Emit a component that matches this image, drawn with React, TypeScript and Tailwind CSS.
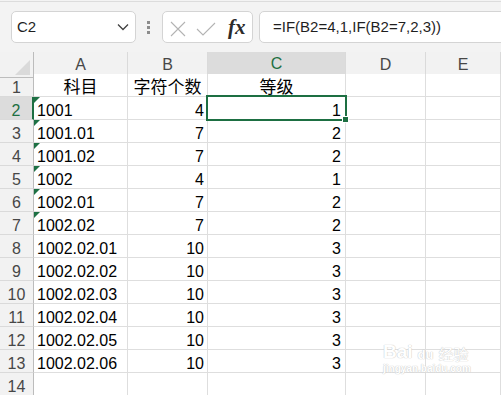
import React from 'react';

const rows: [string, string, string][] = [
  ['1001', '4', '1'],
  ['1001.01', '7', '2'],
  ['1001.02', '7', '2'],
  ['1002', '4', '1'],
  ['1002.01', '7', '2'],
  ['1002.02', '7', '2'],
  ['1002.02.01', '10', '3'],
  ['1002.02.02', '10', '3'],
  ['1002.02.03', '10', '3'],
  ['1002.02.04', '10', '3'],
  ['1002.02.05', '10', '3'],
  ['1002.02.06', '10', '3'],
];

const cols = 'grid grid-cols-[34px_94px_80px_138px_80px_1fr]';
const hdr = 'flex items-center justify-center border-r border-b border-r-[#dadada] border-b-[#bdbdbd] bg-[#f2f2f2] text-[16px] text-[#474747]';
const rowHdr = 'flex items-end justify-center border-r border-b border-r-[#bcbcbc] border-b-[#dadada] bg-[#f2f2f2] text-[16px] leading-[17px] text-[#474747]';
const cell = 'flex items-end border-r border-b border-[#dedede] bg-white text-[16px] leading-[17px] text-black';

function Triangle() {
  return (
    <svg className="absolute left-0 top-0" width="6" height="6" viewBox="0 0 6 6">
      <polygon points="0,0 6,0 0,6" fill="#1d7044" />
    </svg>
  );
}

export default function App() {
  return (
    <div className="relative h-[395px] w-[501px] overflow-hidden bg-[#f3f3f3] font-['Liberation_Sans','Noto_Sans_CJK_SC',sans-serif]">
      {/* toolbar */}
      <div className="mt-[1px] flex h-[51px] items-start border-t border-t-[#dcdcdc] pt-[9px]">
        <div className="ml-[11px] flex h-[32px] w-[125px] shrink-0 items-center justify-between rounded-[5px] border border-[#d4d4d4] bg-white pl-[5px] pr-[6px]">
          <span className="text-[15px] text-[#1f1f1f]">C2</span>
          <svg width="12" height="8" viewBox="0 0 12 8" fill="none">
            <path d="M1 1.5 L6 6.5 L11 1.5" stroke="#404040" strokeWidth="1.3" />
          </svg>
        </div>
        <div className="ml-[11px] mt-[10px] flex shrink-0 flex-col gap-[2px]">
          <div className="h-[3px] w-[3px] bg-[#8c8c8c]" />
          <div className="h-[3px] w-[3px] bg-[#8c8c8c]" />
          <div className="h-[3px] w-[3px] bg-[#8c8c8c]" />
        </div>
        <div className="ml-[12px] flex h-[32px] w-[91px] shrink-0 items-center rounded-[5px] border border-[#d4d4d4] bg-white pl-[7px]">
          <svg width="16" height="16" viewBox="0 0 16 16" fill="none" className="mt-[3px]">
            <path d="M1 1 L15 15 M15 1 L1 15" stroke="#b3b3b3" strokeWidth="1.1" />
          </svg>
          <svg width="20" height="16" viewBox="0 0 20 16" fill="none" className="ml-[10px] mt-[3px]">
            <path d="M1 8 L7 14 L19 2" stroke="#b3b3b3" strokeWidth="1.1" />
          </svg>
          <span className="ml-[12px] font-['Liberation_Serif',serif] text-[21px] font-bold italic leading-none text-[#2b2b2b]">fx</span>
        </div>
        <div className="ml-[6px] flex h-[32px] w-[260px] shrink-0 items-center rounded-[5px] border border-[#d4d4d4] bg-white pl-[13px]">
          <span className="text-[15px] text-[#1f1f1f]">=IF(B2=4,1,IF(B2=7,2,3))</span>
        </div>
      </div>

      {/* sheet */}
      <div className="relative">
        <div className={`${cols} h-[22px]`}>
          <div className="relative border-r border-b border-r-[#bcbcbc] border-b-[#bdbdbd] bg-[#f2f2f2]">
            <svg className="absolute bottom-[2px] right-[3px]" width="15" height="15" viewBox="0 0 15 15">
              <polygon points="15,0 15,15 0,15" fill="#dadada" />
            </svg>
          </div>
          <div className={hdr}>A</div>
          <div className={hdr}>B</div>
          <div className="flex items-center justify-center border-r border-b-2 border-r-[#dadada] border-b-[#1d6f42] bg-[#dcdcdc] text-[16px] text-[#1d6f42]">C</div>
          <div className={hdr}>D</div>
          <div className={hdr}>E</div>
        </div>

        <div className={`${cols} h-[23px]`}>
          <div className={rowHdr}>1</div>
          <div className={`${cell} justify-center font-['Noto_Sans_CJK_SC',sans-serif] text-[17px] leading-[20px]`}>科目</div>
          <div className={`${cell} justify-center font-['Noto_Sans_CJK_SC',sans-serif] text-[17px] leading-[20px]`}>字符个数</div>
          <div className={`${cell} justify-center font-['Noto_Sans_CJK_SC',sans-serif] text-[17px] leading-[20px]`}>等级</div>
          <div className={cell} />
          <div className={cell} />
        </div>

        {rows.map(([a, b, c], i) => (
          <div key={i} className={`${cols} h-[23px]`}>
            <div
              className={
                i === 0
                  ? 'flex items-end justify-center border-r-2 border-b border-r-[#1d6f42] border-b-[#dadada] bg-[#dcdcdc] text-[16px] leading-[17px] text-[#1d6f42]'
                  : rowHdr
              }
            >
              {i + 2}
            </div>
            <div className={`${cell} relative pl-[3px]`}>
              {i < 6 && <Triangle />}
              {a}
            </div>
            <div className={`${cell} justify-end pr-[3px]`}>{b}</div>
            <div className={`${cell} justify-end pr-[4px]`}>{c}</div>
            <div className={cell} />
            <div className={cell} />
          </div>
        ))}

        <div className={`${cols} h-[23px]`}>
          <div className={rowHdr}>14</div>
          <div className={cell} />
          <div className={cell} />
          <div className={cell} />
          <div className={cell} />
          <div className={cell} />
        </div>

        {/* selection C2 */}
        <div className="pointer-events-none absolute left-[206px] top-[43px] h-[26px] w-[141px] border-2 border-[#1d6f42]" />
        <div className="absolute left-[342px] top-[64px] h-[7px] w-[7px] border border-white bg-[#1d6f42]" />
      </div>

      {/* watermark */}
      <div className="pointer-events-none absolute left-[383px] top-[342px] flex flex-col items-start text-white [text-shadow:0_0_1px_#c8c8c8,0_0_1px_#c8c8c8]">
        <div className="flex items-end gap-[5px] leading-none">
          <span className="text-[19px] font-bold">Bai</span>
          <span className="rounded-full text-[13px] font-bold">du</span>
          <span className="text-[15px] font-['Noto_Sans_CJK_SC',sans-serif]">经验</span>
        </div>
        <span className="mt-[3px] text-[10px] font-bold leading-none">jingyan.baidu.com</span>
      </div>
    </div>
  );
}
